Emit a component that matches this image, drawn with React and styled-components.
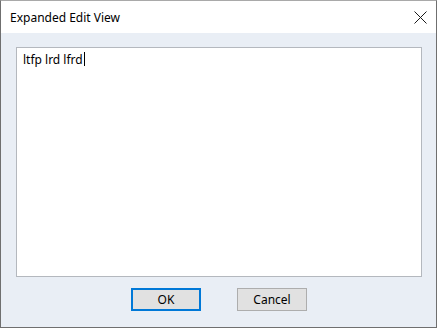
import React from "react";
import styled, { createGlobalStyle } from "styled-components";

const Global = createGlobalStyle`
  html, body {
    margin: 0;
    padding: 0;
    background: #ffffff;
  }
  * {
    box-sizing: border-box;
  }
`;

function App() {
  return (
    <>
      <Global />
      <Window>
        <TitleBar>
          <Title>Expanded Edit View</Title>
          <CloseButton aria-label="Close">
            <svg width="13" height="13" viewBox="0 0 13 13">
              <path d="M0.5 0.5 L12.5 12.5 M12.5 0.5 L0.5 12.5" stroke="#1a1a1a" strokeWidth="1" fill="none" />
            </svg>
          </CloseButton>
        </TitleBar>
        <Body>
          <EditBox>
            <Text>
              ltfp lrd lfrd<Caret />
            </Text>
          </EditBox>
          <ButtonRow>
            <Button $default>OK</Button>
            <Button>Cancel</Button>
          </ButtonRow>
        </Body>
      </Window>
    </>
  );
}

const Window = styled.div`
  width: 437px;
  height: 328px;
  display: flex;
  flex-direction: column;
  border: 1px solid #6f6f6f;
  border-top-color: #a9a9a9;
  font-family: "Noto Sans", "Open Sans", sans-serif;
  overflow: hidden;
`;

const TitleBar = styled.div`
  height: 32px;
  display: flex;
  align-items: center;
  justify-content: space-between;
  background: #ffffff;
  padding: 0 9px 0 9px;
`;

const Title = styled.div`
  font-size: 12px;
  color: #000000;
`;

const CloseButton = styled.div`
  width: 14px;
  height: 14px;
  display: flex;
  align-items: center;
  justify-content: center;
`;

const Body = styled.div`
  flex: 1;
  display: flex;
  flex-direction: column;
  background: #e9eef5;
  padding: 14px 14px 0 15px;
`;

const EditBox = styled.div`
  height: 230px;
  width: 406px;
  background: #ffffff;
  border: 1px solid #b4b8be;
  padding: 4px 6px;
`;

const Text = styled.div`
  font-size: 12px;
  color: #000000;
  display: flex;
  align-items: center;
  height: 14px;
`;

const Caret = styled.span`
  display: inline-block;
  width: 1px;
  height: 14px;
  background: #000000;
  margin-left: 1px;
`;

const ButtonRow = styled.div`
  display: flex;
  justify-content: center;
  gap: 36px;
  margin-top: 11px;
`;

const Button = styled.div`
  width: 70px;
  height: 23px;
  display: flex;
  align-items: center;
  justify-content: center;
  font-size: 12px;
  color: #000000;
  background: #e1e1e1;
  border: ${(p) => (p.$default ? "2px solid #0078d7" : "1px solid #adadad")};
`;

export default App;
